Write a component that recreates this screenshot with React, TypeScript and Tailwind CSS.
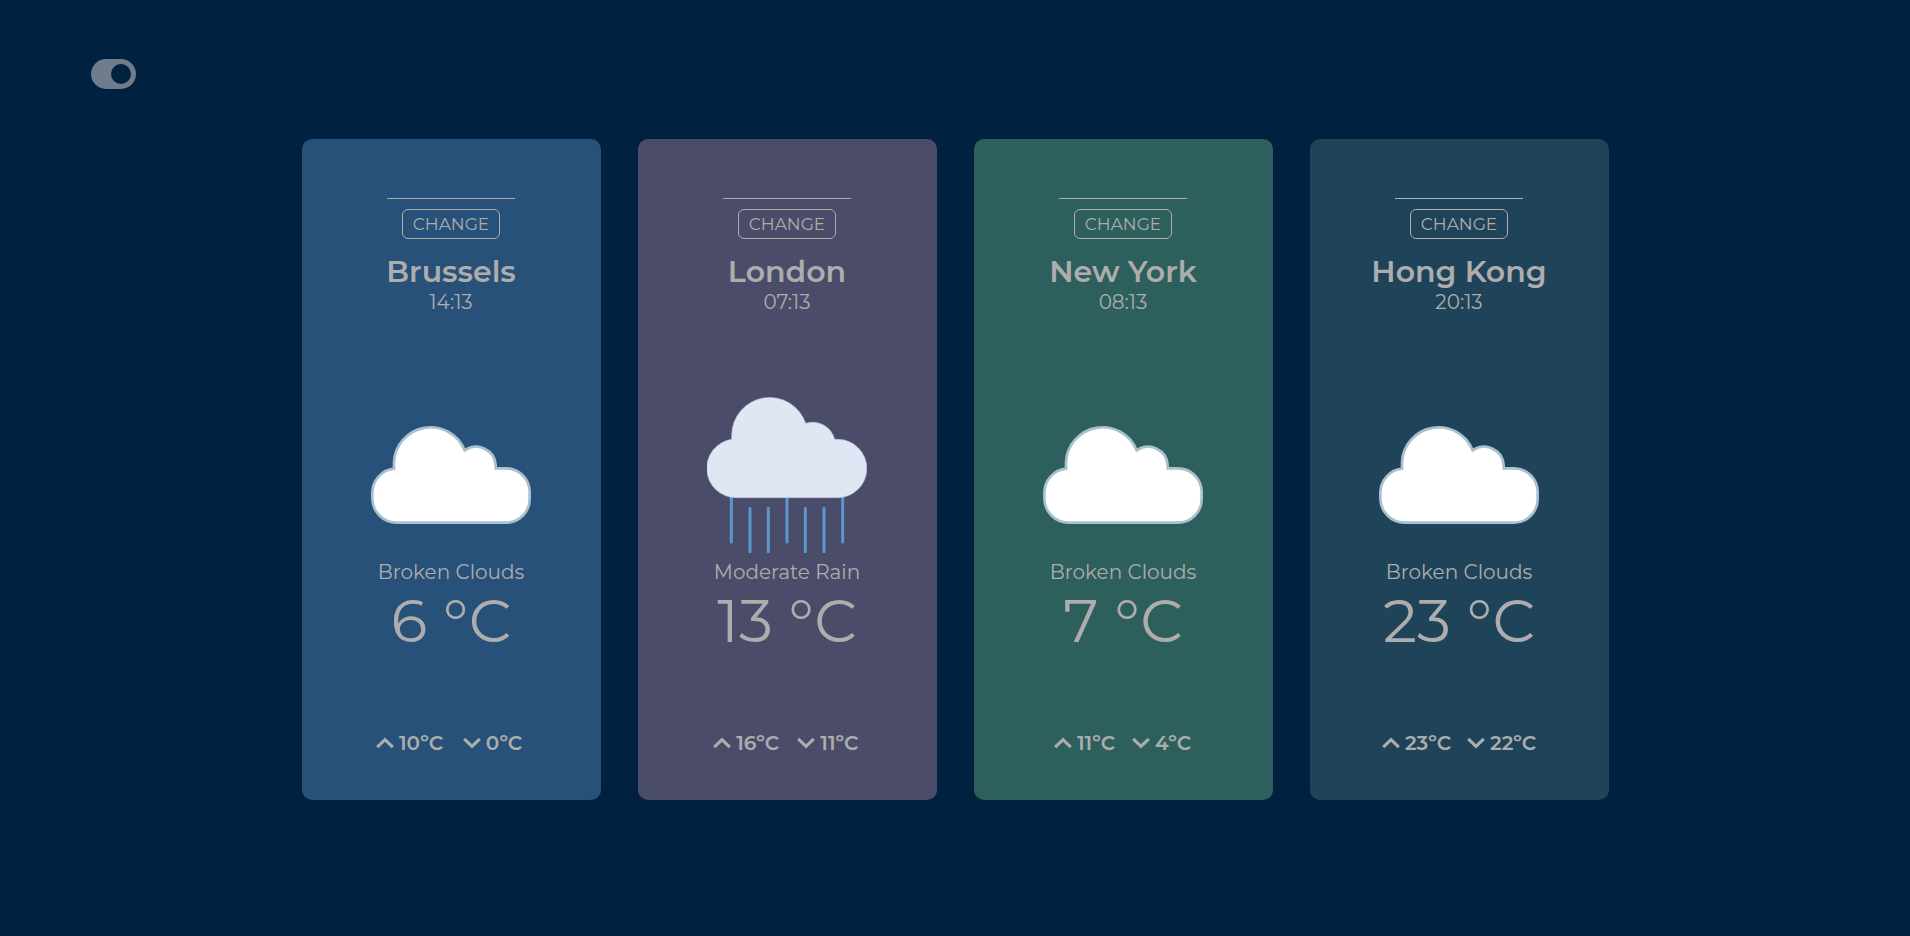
import { useState } from "react";

type Sky = "clouds" | "rain";

interface CityWeather {
  city: string;
  time: string;
  sky: Sky;
  description: string;
  temp: number;
  high: number;
  low: number;
  color: string;
}

const cities: CityWeather[] = [
  { city: "Brussels", time: "14:13", sky: "clouds", description: "Broken Clouds", temp: 6, high: 10, low: 0, color: "bg-[#275178]" },
  { city: "London", time: "07:13", sky: "rain", description: "Moderate Rain", temp: 13, high: 16, low: 11, color: "bg-[#4b4c69]" },
  { city: "New York", time: "08:13", sky: "clouds", description: "Broken Clouds", temp: 7, high: 11, low: 4, color: "bg-[#2d605d]" },
  { city: "Hong Kong", time: "20:13", sky: "clouds", description: "Broken Clouds", temp: 23, high: 23, low: 22, color: "bg-[#1f4359]" },
];

function CloudIcon() {
  return (
    <svg viewBox="33 45 480 300" className="w-40" aria-hidden="true">
      <path
        d="M110 338A73 73 0 0 1 37 265V248A73 73 0 0 1 102 176V157A110 110 0 0 1 314 121A59 59 0 0 1 407 166V175H438A71 71 0 0 1 509 246V267A71 71 0 0 1 438 338Z"
        fill="#fff"
        stroke="#a9c1cf"
        strokeWidth="8"
      />
    </svg>
  );
}

function RainIcon() {
  return (
    <svg viewBox="51 51 480 468" className="w-40" aria-hidden="true">
      <path
        d="M124 350V486M291 350V486M458 350V486M180 385V515M235 385V515M346 385V515M402 385V515"
        stroke="#5c97cd"
        strokeWidth="9"
        strokeLinecap="round"
      />
      <path
        d="M139 353A88 88 0 0 1 125 178V165A114 114 0 0 1 347 130A68 68 0 0 1 434 178H443A87.500 87.500 0 0 1 443 353Z"
        fill="#dfe6f4"
        stroke="#b9c3d8"
        strokeWidth="2"
      />
    </svg>
  );
}

function Chevron({ down = false }: { down?: boolean }) {
  return (
    <svg viewBox="0 0 18 12" className="h-3 w-[18px]" fill="none" stroke="currentColor" strokeWidth="3.200" aria-hidden="true">
      <path d={down ? "M1.200 1.800L9 9.300L16.800 1.800" : "M1.200 10.200L9 2.700L16.800 10.200"} />
    </svg>
  );
}

function WeatherCard({ data }: { data: CityWeather }) {
  return (
    <article className={`flex flex-col items-center rounded-[10px] pt-7 pb-[45px] ${data.color}`}>
      <form className="flex flex-col items-center gap-[10px]" onSubmit={(e) => e.preventDefault()}>
        <input
          type="text"
          aria-label={`Replace ${data.city}`}
          className="h-8 w-32 border-b border-[#adadad] bg-transparent text-center text-base outline-none"
        />
        <button type="submit" className="h-[30px] rounded-md border border-[#adadad] px-[10px] pt-px text-[17px] leading-none">
          CHANGE
        </button>
      </form>
      <h2 className="mt-[15px] text-[30px] leading-9 font-semibold">{data.city}</h2>
      <p className="text-xl leading-6">{data.time}</p>
      <div className="mt-[81px] flex h-40 items-center">{data.sky === "rain" ? <RainIcon /> : <CloudIcon />}</div>
      <p className="mt-[5px] text-xl leading-6">{data.description}</p>
      <p className="mt-[7px] text-[60px] leading-[60px]">{data.temp} °C</p>
      <div className="mt-20 grid grid-cols-2 gap-4 text-xl leading-6 font-semibold">
        <span className="flex items-center justify-center gap-[5px]">
          <Chevron />
          {data.high}ºC
        </span>
        <span className="flex items-center justify-center gap-[5px]">
          <Chevron down />
          {data.low}ºC
        </span>
      </div>
    </article>
  );
}

export default function App() {
  const [dark, setDark] = useState(true);

  return (
    <main className="min-h-screen bg-[#002140] pt-[59px] pb-16 font-[Montserrat,Inter,sans-serif] text-[#adadad]">
      <button
        type="button"
        role="switch"
        aria-checked={dark}
        aria-label="Dark mode"
        onClick={() => setDark(!dark)}
        className="ml-[91px] block text-[#6e7c8c]"
      >
        <svg viewBox="0 0 45 30" className={dark ? "w-[45px]" : "w-[45px] rotate-180"} fill="currentColor" aria-hidden="true">
          <path fillRule="evenodd" d="M15 0H30A15 15 0 0 1 30 30H15A15 15 0 0 1 15 0ZM30 5A10 10 0 1 0 30 25A10 10 0 1 0 30 5Z" />
        </svg>
      </button>
      <section className="mx-auto mt-[50px] grid max-w-[1307px] grid-cols-4 gap-[37px]">
        {cities.map((c) => (
          <WeatherCard key={c.city} data={c} />
        ))}
      </section>
    </main>
  );
}
